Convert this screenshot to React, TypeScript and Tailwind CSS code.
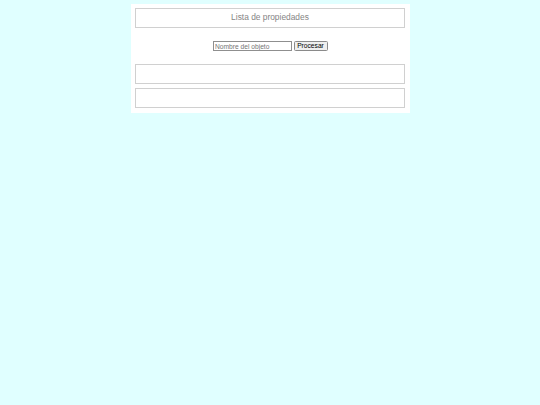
import React, { useState } from "react";

export default function App() {
  const [name, setName] = useState("");

  return (
    <div
      className="w-full min-h-screen bg-[#e0ffff] pt-[3.5px]"
      style={{ fontFamily: '"Liberation Sans", Arial, sans-serif' }}
    >
      <div className="w-[279px] mx-auto bg-white px-[4.5px] pt-[4px] pb-[4.5px]">
        {/* title */}
        <div className="h-[20px] border border-[#d0d0d0] flex items-center justify-center">
          <span className="text-[8.4px] leading-none text-[#858585]">
            Lista de propiedades
          </span>
        </div>

        {/* form */}
        <div className="flex justify-center items-center gap-[2px] mt-[13.5px]">
          <input
            value={name}
            onChange={(e) => setName(e.target.value)}
            placeholder="Nombre del objeto"
            className="w-[79px] h-[10px] border border-[#8f8f8f] px-[1.5px] text-[6.67px] leading-none outline-none placeholder:text-[#757575]"
          />
          <button className="w-[34px] h-[10px] border border-[#8a8a8a] bg-[#efefef] rounded-[1.5px] text-[6.67px] leading-none text-black">
            Procesar
          </button>
        </div>

        {/* results */}
        <div className="h-[20px] border border-[#d0d0d0] mt-[12.5px]"></div>
        <div className="h-[20px] border border-[#d0d0d0] mt-[4.5px]"></div>
      </div>
    </div>
  );
}
